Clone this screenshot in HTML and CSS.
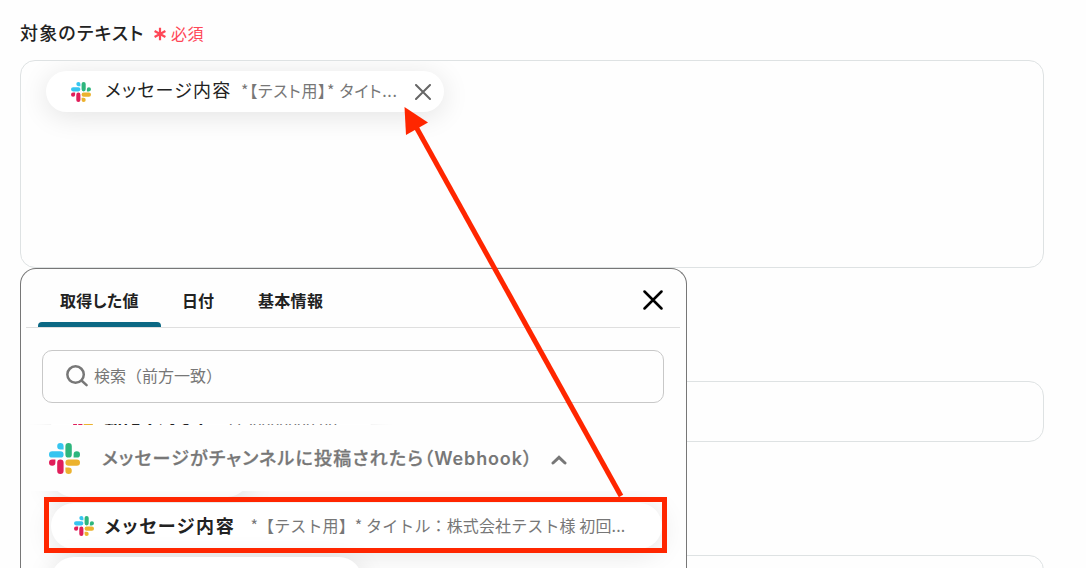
FILE: index.html
```html
<!DOCTYPE html>
<html lang="ja">
<head>
    <meta charset="UTF-8">
    <title>対象のテキスト</title>
    <link rel="stylesheet" href="styles.css">
</head>
<body>
    <svg width="0" height="0" class="defs">
        <symbol id="slack" viewBox="0 0 31 31">
            <path fill="#36c5f0" d="M11.4 0a3.2 3.2 0 0 1 3.2 3.2v3.2h-3.2a3.2 3.2 0 0 1 0-6.4zM3.2 8.2h8.2a3.2 3.2 0 0 1 0 6.4H3.2a3.2 3.2 0 0 1 0-6.4z"/>
            <path fill="#2eb67d" d="M31 11.4a3.2 3.2 0 0 1-3.2 3.2h-3.2v-3.2a3.2 3.2 0 0 1 6.4 0zM22.8 3.2v8.2a3.2 3.2 0 0 1-6.4 0V3.2a3.2 3.2 0 0 1 6.4 0z"/>
            <path fill="#ecb22e" d="M19.6 31a3.2 3.2 0 0 1-3.2-3.2v-3.2h3.2a3.2 3.2 0 0 1 0 6.4zM27.8 22.8h-8.2a3.2 3.2 0 0 1 0-6.4h8.2a3.2 3.2 0 0 1 0 6.4z"/>
            <path fill="#e01e5a" d="M0 19.6a3.2 3.2 0 0 1 3.2-3.2h3.2v3.2a3.2 3.2 0 0 1-6.4 0zM8.2 27.8v-8.2a3.2 3.2 0 0 1 6.4 0v8.2a3.2 3.2 0 0 1-6.4 0z"/>
        </symbol>
    </svg>

    <main class="form">
        <div class="label">
            <span class="label-text">対象のテキスト</span>
            <svg class="asterisk" width="12" height="14" viewBox="0 0 12 14"><path d="M6 .8v12.4M.6 4l10.8 6M.6 10l10.8-6"/></svg>
            <span class="required">必須</span>
        </div>
        <div class="field field-text">
            <div class="chip chip-value">
                <svg class="chip-icon"><use href="#slack"/></svg>
                <span class="chip-name">メッセージ内容</span>
                <span class="chip-sample">*【テスト用】* タイト...</span>
                <svg class="chip-remove" width="16" height="16" viewBox="0 0 16 16"><path d="M1 1l14 14M15 1L1 15"/></svg>
            </div>
        </div>
        <div class="field field-second"></div>
        <div class="field field-third"></div>
    </main>

    <section class="panel">
        <nav class="tabs">
            <span class="tab tab-active">取得した値</span>
            <span class="tab tab-date">日付</span>
            <span class="tab tab-info">基本情報</span>
            <svg class="close" width="20" height="20" viewBox="0 0 20 20"><path d="M1.5 1.5l17 17M18.5 1.5l-17 17"/></svg>
        </nav>
        <div class="search">
            <svg width="23" height="23" viewBox="0 0 23 23"><circle cx="10" cy="10" r="8.6"/><path d="M16.2 16.2l5.3 4.8"/></svg>
            <span>検索（前方一致）</span>
        </div>
        <div class="list">
            <div class="peek">
                <div class="chip chip-peek">
                    <svg class="chip-icon"><use href="#slack"/></svg>
                    <span class="chip-name">動作イベント</span>
                    <span class="chip-sample">1730000000.00</span>
                </div>
            </div>
            <div class="group">
                <svg class="group-icon"><use href="#slack"/></svg>
                <span class="group-name">メッセージがチャンネルに投稿されたら（<b>Webhook</b>）</span>
                <svg class="caret" width="16" height="10" viewBox="0 0 16 10"><path d="M2 8L8 2.4 14 8"/></svg>
            </div>
            <div class="items">
                <div class="chip chip-prev"></div>
                <div class="chip chip-item">
                    <svg class="chip-icon"><use href="#slack"/></svg>
                    <span class="chip-name">メッセージ内容</span>
                    <span class="chip-sample">*【テスト用】* タイトル：株式会社テスト様 初回...</span>
                </div>
                <div class="chip chip-next"></div>
            </div>
        </div>
    </section>

    <!-- annotation -->
    <div class="highlight"></div>
    <svg class="arrow" width="1086" height="568" viewBox="0 0 1086 568">
        <path class="arrow-line" d="M621 496L415 125"/>
        <path class="arrow-head" d="M404.5 107L428 122.5L406 135z"/>
    </svg>
</body>
</html>
```

FILE: styles.css
```css
* {
    box-sizing: border-box;
}

body {
    position: relative;
    width: 1086px;
    height: 568px;
    margin: 0;
    overflow: hidden;
    background: #fefefe;
    color: #222;
    font-family: "Noto Sans CJK JP", sans-serif;
    white-space: nowrap;
}

svg {
    flex: none;
    fill: none;
    stroke-linecap: round;
}

.defs {
    position: absolute;
}

.form {
    height: 568px;
    padding: 20px 42px 0 20px;
    overflow: hidden;
}

.label {
    display: flex;
    align-items: center;
    height: 26px;
    margin-bottom: 14px;
}

.label-text {
    width: 134px;
    padding-bottom: 2px;
    font-size: 18px;
    font-weight: 500;
    font-feature-settings: "palt";
    letter-spacing: 1.2px;
}

.asterisk {
    margin-top: 2px;
    stroke: #ff4757;
    stroke-width: 2.2;
    stroke-linecap: butt;
}

.required {
    margin-left: 5px;
    color: #ff4757;
    font-size: 16px;
    letter-spacing: 0.4px;
}

.field {
    height: 61px;
    border: 1px solid #dee2e3;
    border-radius: 15px;
}

.field-text {
    height: 208px;
    padding: 10px 25px;
    overflow: hidden;
}

.field-second {
    margin-top: 113px;
}

.field-third {
    margin-top: 113px;
}

.chip {
    display: flex;
    align-items: center;
    border-radius: 23px;
    background: #fff;
    box-shadow: 0 4px 28px rgba(0, 0, 0, 0.11);
}

.chip-icon {
    width: 20px;
    height: 20px;
}

.chip-sample {
    color: #777;
    font-size: 16px;
}

.chip-value {
    width: 398px;
    height: 41px;
    padding-left: 24.5px;
}

.chip-value .chip-name {
    width: 136px;
    margin-left: 14.5px;
    padding-bottom: 5px;
    font-size: 18px;
    font-feature-settings: "palt";
    letter-spacing: 1.2px;
}

.chip-value .chip-sample {
    width: 174px;
    padding-bottom: 3px;
    font-feature-settings: "palt";
    letter-spacing: 0.75px;
}

.chip-remove {
    stroke: #666;
    stroke-width: 2;
}

.panel {
    position: absolute;
    top: 268px;
    left: 20px;
    width: 667px;
    height: 300px;
    border: 1px solid #777;
    border-bottom: 0;
    border-radius: 16px 16px 0 0;
    background: #fefefe;
}

.tabs {
    display: flex;
    height: 59px;
    margin: 0 6px 0 5px;
    border-bottom: 1px solid #dfdfdf;
    font-size: 16px;
    font-weight: 700;
}

.tab {
    height: 58px;
    padding-top: 19px;
    line-height: 24px;
    font-feature-settings: "palt";
}

.tab-active {
    display: flex;
    flex-direction: column;
    justify-content: space-between;
    width: 123px;
    margin-left: 12px;
    padding-left: 22px;
    letter-spacing: 0.3px;
}

.tab-active::after {
    content: "";
    height: 5px;
    margin-left: -22px;
    border-radius: 4px 4px 0 0;
    background: #0b6884;
}

.tab-date {
    width: 76px;
    margin-left: 21px;
}

.tab-info {
    letter-spacing: 0.3px;
}

.close {
    margin: 21px 17px 0 auto;
    stroke: #000;
    stroke-width: 2.5;
}

.search {
    display: flex;
    align-items: center;
    width: 622px;
    height: 53px;
    margin: 22px 0 0 21px;
    padding: 0 0 2px 23px;
    border: 1px solid #c8c8c8;
    border-radius: 10px;
    color: #777;
    font-size: 16px;
}

.search span {
    padding-bottom: 2px;
}

.search svg {
    margin-right: 6px;
    width: 22px;
    height: 22px;
    stroke: #777;
    stroke-width: 2.6;
}

.list {
    height: 144px;
    margin: 21px 6px 0 5px;
    overflow: hidden;
}

/* last visible pixels of the row scrolled under the group header */
.peek {
    height: 1px;
    overflow: hidden;
}

.chip-peek {
    width: 320px;
    height: 46px;
    margin: -26px 0 0 25px;
    padding-left: 22px;
}

.chip-peek .chip-name {
    margin: 0 14px 0 11px;
    padding-bottom: 2px;
    font-size: 18px;
    font-weight: 700;
}

.group {
    display: flex;
    align-items: center;
    height: 66px;
    padding-left: 22.5px;
    background: #fefefe;
}

.group-icon {
    width: 31px;
    height: 31px;
}

.group-name {
    width: 449px;
    margin-left: 22.5px;
    padding-bottom: 2px;
    color: #777;
    font-size: 18px;
    font-weight: 500;
    font-feature-settings: "palt";
    letter-spacing: 1.2px;
    -webkit-text-stroke: 0.3px #777;
}

.group-name b {
    font-family: Inter, sans-serif;
    font-weight: 600;
    letter-spacing: 0.85px;
    -webkit-text-stroke: 0;
}

.caret {
    margin-top: 3px;
    stroke: #777;
    stroke-width: 3;
}

.items {
    height: 77px;
    overflow: hidden;
}

.chip-prev {
    width: 200px;
    height: 46px;
    margin: -40px 0 0 24px;
}

.chip-item {
    width: 611px;
    height: 46px;
    margin: 6px 0 0 25px;
    padding-left: 22.5px;
}

.chip-item .chip-name {
    width: 146px;
    margin-left: 11px;
    padding-bottom: 2px;
    font-size: 18px;
    font-weight: 700;
    font-feature-settings: "palt";
    letter-spacing: 1.7px;
}

.chip-item .chip-sample {
    padding-bottom: 2px;
    letter-spacing: 0.12px;
}

.chip-next {
    width: 311px;
    height: 46px;
    margin: 8px 0 0 25px;
}

.highlight {
    position: absolute;
    top: 497px;
    left: 44px;
    width: 623px;
    height: 56px;
    border: 5px solid #ff2600;
}

.arrow {
    position: absolute;
    top: 0;
    left: 0;
}

.arrow-line {
    stroke: #ff2600;
    stroke-width: 5;
    stroke-linecap: butt;
}

.arrow-head {
    fill: #ff2600;
}
```
